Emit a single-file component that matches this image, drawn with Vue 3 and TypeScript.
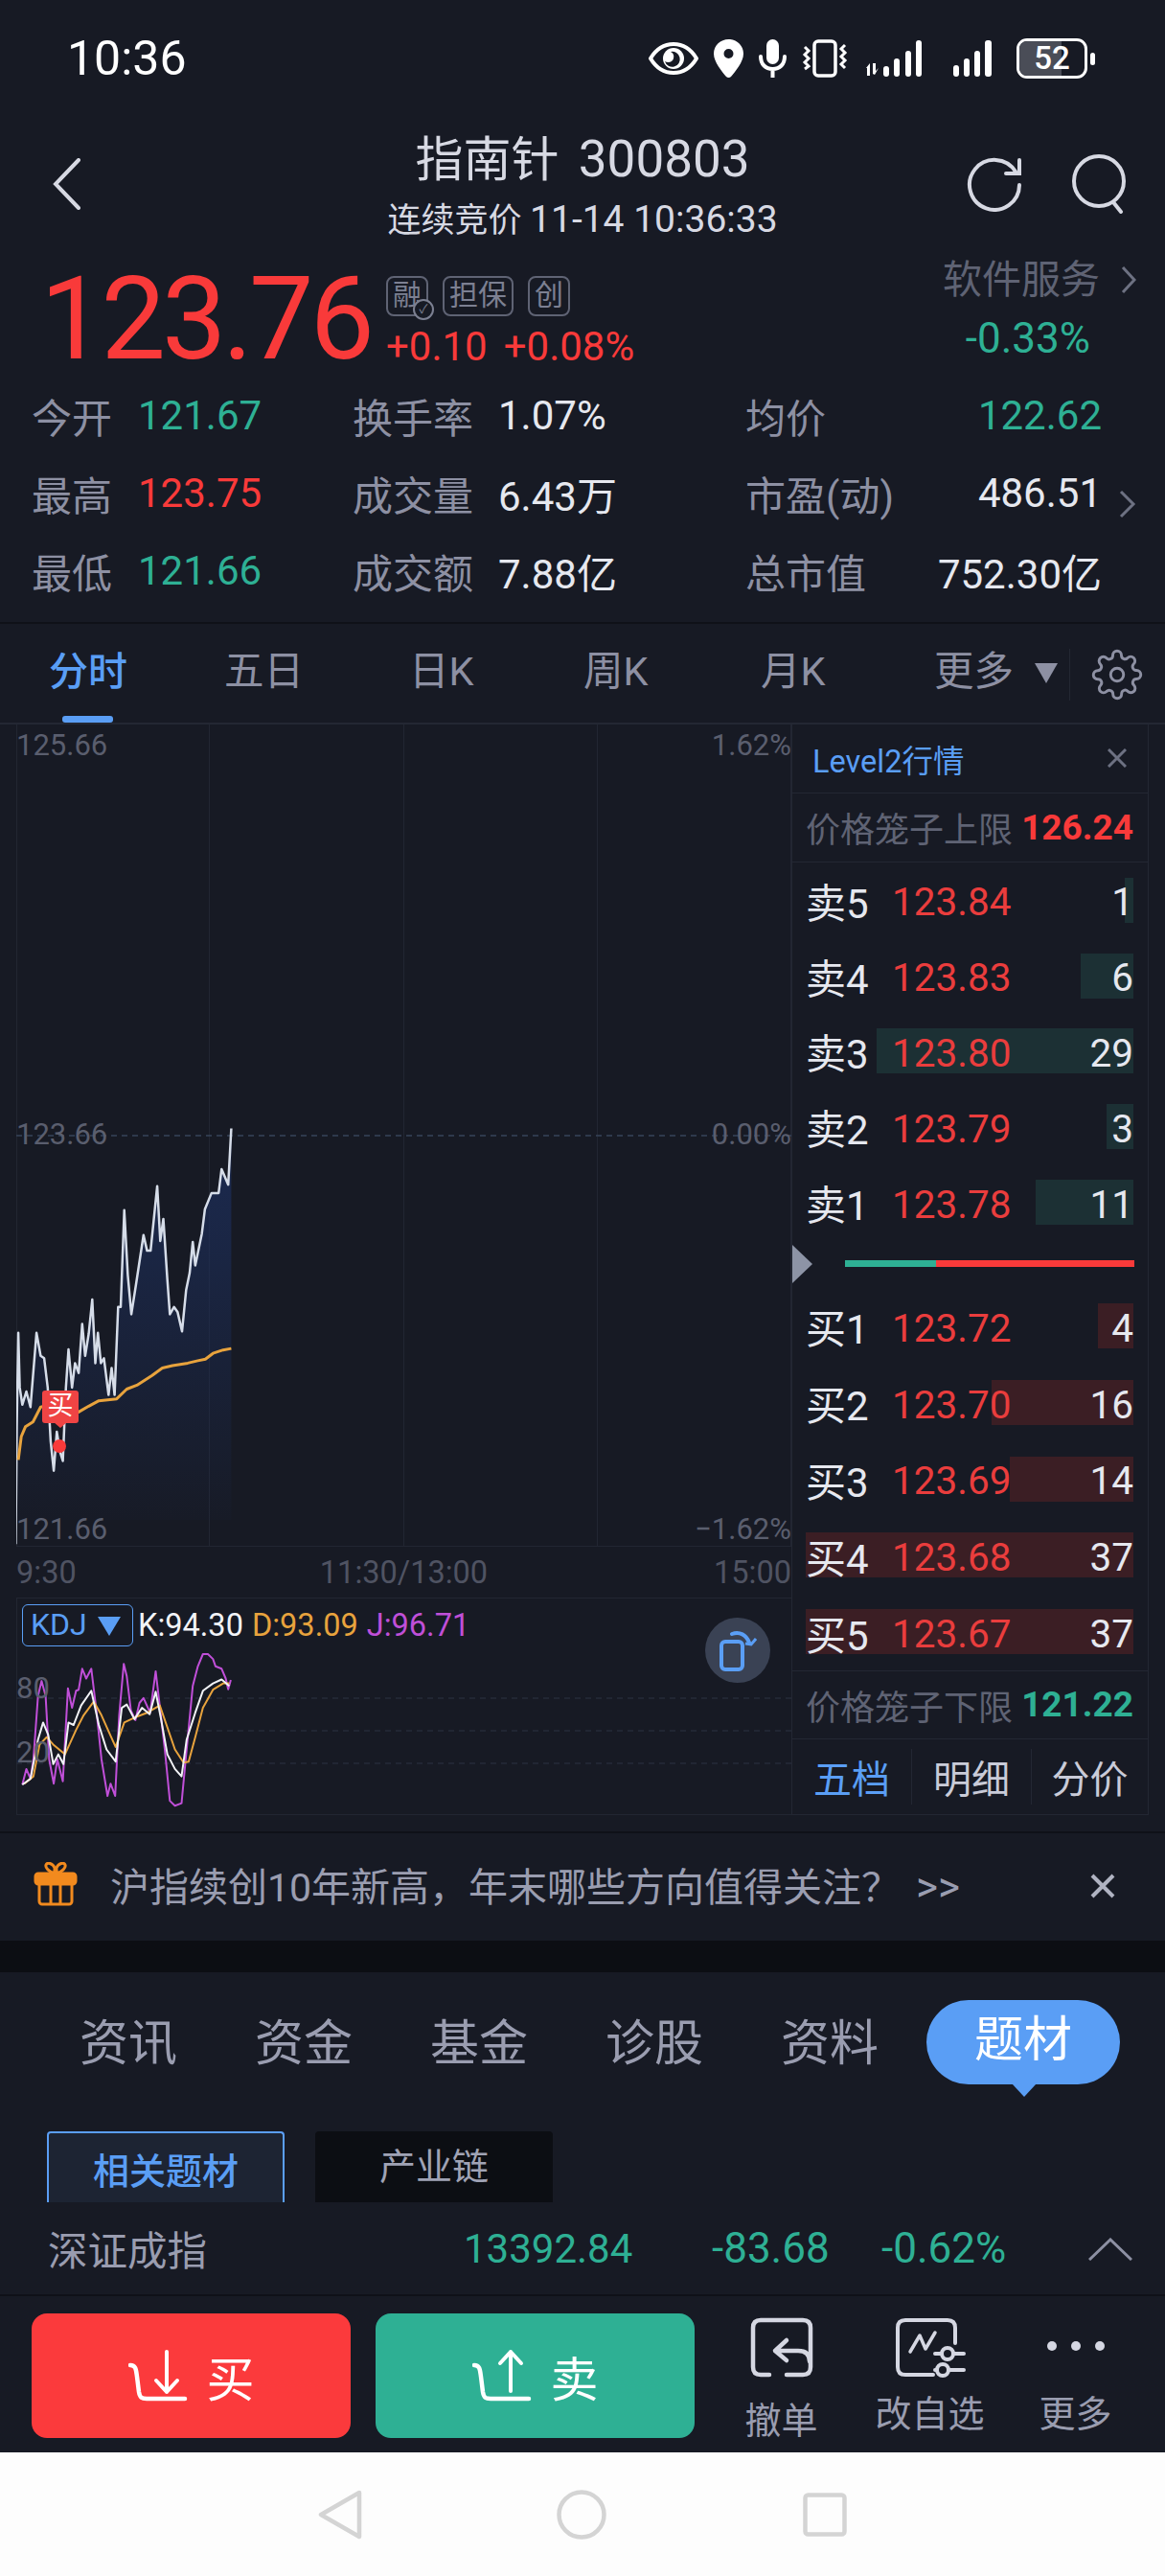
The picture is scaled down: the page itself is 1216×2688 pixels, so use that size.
<script setup lang="ts">
// 行情详情页 指南针 300803
type Pt = [number, number]

const stats = [
  [{ label: '今开', value: '121.67', cls: 'green' }, { label: '换手率', value: '1.07%', cls: '' }, { label: '均价', value: '122.62', cls: 'green' }],
  [{ label: '最高', value: '123.75', cls: 'red' }, { label: '成交量', value: '6.43万', cls: '' }, { label: '市盈(动)', value: '486.51', cls: '' }],
  [{ label: '最低', value: '121.66', cls: 'green' }, { label: '成交额', value: '7.88亿', cls: '' }, { label: '总市值', value: '752.30亿', cls: '' }],
]
const flat = stats.flat()

const chartTabs = ['五日', '日K', '周K', '月K']
const newsTabs = ['资讯', '资金', '基金', '诊股', '资料']

const asks = [
  { name: '卖5', price: '123.84', qty: 1, bar: 9 },
  { name: '卖4', price: '123.83', qty: 6, bar: 55 },
  { name: '卖3', price: '123.80', qty: 29, bar: 268 },
  { name: '卖2', price: '123.79', qty: 3, bar: 28 },
  { name: '卖1', price: '123.78', qty: 11, bar: 102 },
]
const bids = [
  { name: '买1', price: '123.72', qty: 4, bar: 37 },
  { name: '买2', price: '123.70', qty: 16, bar: 148 },
  { name: '买3', price: '123.69', qty: 14, bar: 129 },
  { name: '买4', price: '123.68', qty: 37, bar: 342 },
  { name: '买5', price: '123.67', qty: 37, bar: 342 },
]

const pricePts: Pt[] = [[31,1000],[33,760],[36,568],[39,680],[44,715],[52,688],[60,720],[72,568],[80,615],[87,620],[94,680],[100,790],[106,850],[112,770],[118,810],[124,830],[130,680],[135,602],[142,680],[148,630],[155,650],[162,550],[168,615],[175,570],[182,500],[188,630],[193,568],[199,630],[205,620],[214,695],[220,640],[226,695],[233,515],[238,515],[245,317],[252,450],[259,530],[268,470],[283,368],[290,400],[297,400],[310,268],[316,380],[322,335],[330,460],[335,530],[343,515],[350,525],[359,565],[367,480],[374,445],[380,382],[385,430],[398,365],[404,315],[417,282],[431,282],[437,233],[450,265],[456,150]]
const avgPts: Pt[] = [[36,828],[42,780],[50,760],[65,750],[80,720],[100,715],[155,730],[175,718],[195,707],[230,703],[250,683],[270,675],[300,655],[320,640],[340,635],[370,630],[390,625],[405,622],[420,610],[440,603],[456,600]]
const jPts: Pt[] = [[44,1492],[52,1460],[60,1480],[66,1440],[75,1310],[82,1280],[90,1310],[97,1440],[106,1490],[113,1440],[124,1485],[134,1295],[142,1335],[150,1300],[155,1298],[162,1255],[170,1275],[180,1255],[190,1340],[200,1440],[212,1515],[218,1490],[227,1515],[235,1350],[244,1245],[250,1270],[258,1340],[267,1360],[275,1325],[283,1315],[296,1345],[307,1260],[316,1340],[325,1420],[335,1525],[345,1535],[358,1530],[367,1430],[380,1290],[390,1250],[400,1225],[410,1225],[420,1235],[425,1250],[437,1255],[445,1275],[450,1297],[455,1278]]
const kPts: Pt[] = [[44,1492],[60,1480],[75,1400],[85,1365],[95,1390],[105,1450],[115,1430],[125,1450],[135,1365],[145,1370],[160,1330],[180,1300],[195,1370],[210,1420],[228,1445],[240,1335],[250,1328],[265,1358],[280,1335],[295,1348],[307,1302],[318,1360],[330,1430],[345,1460],[358,1475],[368,1400],[385,1345],[400,1300],[420,1285],[437,1277],[452,1290]]
const dPts: Pt[] = [[48,1490],[66,1475],[78,1410],[92,1395],[105,1410],[128,1430],[150,1380],[165,1350],[185,1322],[200,1350],[215,1385],[228,1415],[245,1365],[265,1355],[290,1345],[315,1330],[330,1375],[345,1420],[362,1447],[372,1445],[385,1395],[400,1335],[420,1298],[440,1285],[452,1285]]

// 采样坐标换算成 svg 里的像素
function toLine(pts: Pt[], top: number) {
  return pts.map(([x, y]) => `${(x / 1.889 - 17).toFixed(1)},${(y / 1.96 + 1100 - top).toFixed(1)}`).join(' ')
}
const priceLine = toLine(pricePts, 755)
const avgLine = toLine(avgPts, 755)
const areaLine = `${priceLine} 224.4,830 0,830`
const jLine = toLine(jPts, 1666)
const kLine = toLine(kPts, 1666)
const dLine = toLine(dPts, 1666)
</script>

<template>
  <div class="page">
    <div class="status">
      <span class="time">10:36</span>
      <div class="status-icons">
        <svg width="52" height="36" viewBox="0 0 52 36" fill="none"><path d="M2 18C8 8 16 3 26 3s18 5 24 15c-6 10-14 15-24 15S8 28 2 18z" stroke="#fff" stroke-width="4"/><circle cx="26" cy="18" r="11" fill="#fff"/><path d="M23 11a8 8 0 1 1-6 10c3 2 8 1 9-3s-1-6-3-7z" fill="#171a24"/></svg>
        <svg width="31" height="40" viewBox="0 0 31 40"><path fill-rule="evenodd" d="M15.500 0C7 0 0 6.500 0 15c0 9 9 19 13 24 1.500 1.300 3.500 1.300 5 0 4-5 13-15 13-24C31 6.500 24 0 15.500 0zm0 10a5 5 0 1 1 0 10 5 5 0 0 1 0-10z" fill="#fff"/></svg>
        <svg width="29" height="40" viewBox="0 0 29 40" fill="none"><rect x="8" y="0" width="13" height="26" rx="6.500" fill="#fff"/><path d="M2 18c0 8 5 13 12.500 13S27 26 27 18M14.500 31v9" stroke="#fff" stroke-width="4" stroke-linecap="round"/></svg>
        <svg width="48" height="40" viewBox="0 0 48 40" fill="none" stroke="#fff"><rect x="13" y="2" width="22" height="36" rx="4" stroke-width="3.500"/><path d="M3 8l4 4-4 4 4 4-4 4 4 4-4 3M45 6l-4 4 4 4-4 4 4 4-4 4 4 4" stroke-width="3"/></svg>
        <svg width="70" height="40" viewBox="0 0 70 40" fill="#fff"><path d="M3 30l4-5v13H4V30zM10 25h3v8l3-3-4 7-2-1z"/><rect x="21" y="28" width="6" height="11" rx="3"/><rect x="32" y="20" width="6" height="19" rx="3"/><rect x="44" y="12" width="6" height="27" rx="3"/><rect x="55" y="1" width="6" height="38" rx="3"/></svg>
        <svg class="sig2" width="50" height="40" viewBox="0 0 50 40" fill="#fff"><rect x="0" y="27" width="6" height="12" rx="3"/><rect x="11" y="20" width="6" height="19" rx="3"/><rect x="22" y="12" width="6" height="27" rx="3"/><rect x="33" y="1" width="7" height="38" rx="3"/></svg>
        <div class="battery"><span class="battery-fill"></span><span class="battery-num">52</span></div>
        <span class="battery-nub"></span>
      </div>
    </div>

    <div class="topbar">
      <svg class="back" width="30" height="54" viewBox="0 0 30 54" fill="none"><path d="M27 2L3 27l24 25" stroke="#d7d9e3" stroke-width="4" stroke-linecap="round"/></svg>
      <div class="title-box">
        <div class="title">指南针 <span class="title-num">300803</span></div>
        <div class="subtitle">连续竞价 <span class="sub-num">11-14 10:36:33</span></div>
      </div>
      <div class="top-actions">
        <svg width="60" height="60" viewBox="0 0 60 60" fill="none" stroke="#d7d9e3" stroke-width="4" stroke-linecap="round"><path d="M52 18A26 26 0 1 0 56 32"/><path d="M56 6v14H42"/></svg>
        <svg width="60" height="62" viewBox="0 0 60 62" fill="none" stroke="#d7d9e3" stroke-width="4" stroke-linecap="round"><circle cx="29" cy="28" r="26"/><path d="M44 50l8 10"/></svg>
      </div>
    </div>

    <div class="quote">
      <div class="big-price">123.76</div>
      <div class="quote-mid">
        <div class="tags">
          <span class="tag tag-rong">融<i class="tag-check">✓</i></span>
          <span class="tag">担保</span>
          <span class="tag">创</span>
        </div>
        <div class="change"><span>+0.10</span><span>+0.08%</span></div>
      </div>
      <div class="service">
        <div class="service-name">软件服务
          <svg width="16" height="30" viewBox="0 0 16 30" fill="none"><path d="M2 2l12 13L2 28" stroke="#6d7182" stroke-width="3"/></svg>
        </div>
        <div class="service-val">-0.33%</div>
      </div>
    </div>

    <div class="stats">
      <div v-for="(s, i) in flat" :key="s.label" class="stat" :class="'col' + (i % 3)">
        <span class="stat-label">{{ s.label }}</span>
        <span class="stat-val" :class="s.cls">{{ s.value }}</span>
      </div>
      <svg class="stat-more" width="18" height="30" viewBox="0 0 18 30" fill="none"><path d="M2 2l13 13L2 28" stroke="#6d7182" stroke-width="3"/></svg>
    </div>

    <div class="chart-tabs">
      <div class="ctab active">分时<i class="ctab-line"></i></div>
      <div v-for="t in chartTabs" :key="t" class="ctab">{{ t }}</div>
      <div class="ctab more">更多<i class="tri"></i></div>
      <div class="gear-box">
        <svg width="54" height="54" viewBox="0 0 24 24" fill="none" stroke="#8d90a3" stroke-width="1.300"><path d="M12 15a3 3 0 1 0 0-6 3 3 0 0 0 0 6z"/><path d="M19.400 15a1.650 1.650 0 0 0 .33 1.820l.06.06a2 2 0 0 1 0 2.830 2 2 0 0 1-2.830 0l-.06-.06a1.650 1.650 0 0 0-1.820-.33 1.650 1.650 0 0 0-1 1.510V21a2 2 0 0 1-2 2 2 2 0 0 1-2-2v-.09A1.650 1.650 0 0 0 9 19.400a1.650 1.650 0 0 0-1.820.33l-.06.06a2 2 0 0 1-2.830 0 2 2 0 0 1 0-2.830l.06-.06a1.650 1.650 0 0 0 .33-1.820 1.650 1.650 0 0 0-1.510-1H3a2 2 0 0 1-2-2 2 2 0 0 1 2-2h.09A1.650 1.650 0 0 0 4.600 9a1.650 1.650 0 0 0-.33-1.820l-.06-.06a2 2 0 0 1 0-2.830 2 2 0 0 1 2.830 0l.06.06a1.650 1.650 0 0 0 1.820.33H9a1.650 1.650 0 0 0 1-1.510V3a2 2 0 0 1 2-2 2 2 0 0 1 2 2v.09a1.650 1.650 0 0 0 1 1.510 1.650 1.650 0 0 0 1.820-.33l.06-.06a2 2 0 0 1 2.830 0 2 2 0 0 1 0 2.830l-.06.06a1.650 1.650 0 0 0-.33 1.820V9a1.650 1.650 0 0 0 1.510 1H21a2 2 0 0 1 2 2 2 2 0 0 1-2 2h-.09a1.650 1.650 0 0 0-1.510 1z"/></svg>
      </div>
    </div>

    <div class="market">
      <div class="chart-col">
        <div class="chart">
          <svg class="fill-svg" width="809" height="858" viewBox="0 0 809 858" fill="none">
            <defs>
              <linearGradient id="area" x1="0" y1="0" x2="0" y2="1">
                <stop offset="0" stop-color="#1d3060" stop-opacity=".75"/>
                <stop offset="1" stop-color="#1d3060" stop-opacity="0"/>
              </linearGradient>
            </defs>
            <path d="M.5 0V858M201.500 0V858M404.500 0V858M606.500 0V858M808.500 0V858M0 857.500H809" stroke="#222632" stroke-width="1"/>
            <path d="M0 429H809" stroke="#37445a" stroke-width="1.500" stroke-dasharray="6 5"/>
            <polygon :points="areaLine" fill="url(#area)"/>
            <polyline :points="priceLine" stroke="#d6dde9" stroke-width="2.500" stroke-linejoin="round"/>
            <polyline :points="avgLine" stroke="#e8a33d" stroke-width="3" stroke-linejoin="round"/>
          </svg>
          <span class="axis top-l">125.66</span>
          <span class="axis top-r">1.62%</span>
          <span class="axis mid-l">123.66</span>
          <span class="axis mid-r">0.00%</span>
          <span class="axis bot-l">121.66</span>
          <span class="axis bot-r">−1.62%</span>
          <div class="buy-mark">买</div>
          <span class="buy-dot"></span>
        </div>
        <div class="time-axis"><span>9:30</span><span>11:30/13:00</span><span class="ta-end">15:00</span></div>
        <div class="kdj">
          <svg class="fill-svg" width="809" height="227" viewBox="0 0 809 227" fill="none">
            <path d="M.5 0V227M0 .5H809M0 226.500H809" stroke="#222632" stroke-width="1"/>
            <path d="M0 105H809M0 139H809M0 173H809" stroke="#262b38" stroke-width="1.500" stroke-dasharray="6 5"/>
            <polyline :points="jLine" stroke="#c04fd8" stroke-width="2" stroke-linejoin="round"/>
            <polyline :points="dLine" stroke="#e8a33d" stroke-width="2" stroke-linejoin="round"/>
            <polyline :points="kLine" stroke="#f2f3f7" stroke-width="2" stroke-linejoin="round"/>
          </svg>
          <span class="axis k80">80</span>
          <span class="axis k20">20</span>
          <div class="kdj-head">
            <span class="kdj-btn">KDJ<i class="kdj-tri"></i></span>
            <span class="k-k">K:94.30</span>
            <span class="k-d">D:93.09</span>
            <span class="k-j">J:96.71</span>
          </div>
          <div class="rotate">
            <svg width="40" height="44" viewBox="0 0 40 44" fill="none" stroke="#5a9ef5" stroke-width="4"><rect x="3" y="13" width="22" height="29" rx="4"/><path d="M14 5c8-3 15 1 18 9" stroke-linecap="round"/><path d="M28 15l6 1 5-6" stroke-width="3"/></svg>
          </div>
        </div>
      </div>

      <div class="panel">
        <div class="panel-head">
          <span>Level2行情</span>
          <svg width="20" height="20" viewBox="0 0 20 20" stroke="#6d7182" stroke-width="3"><path d="M1 1l18 18M19 1L1 19"/></svg>
        </div>
        <div class="limit"><span>价格笼子上限</span><b class="red">126.24</b></div>
        <div v-for="r in asks" :key="r.name" class="row ask">
          <i class="depth ask-bar" :style="{ width: r.bar + 'px' }"></i>
          <span class="r-name">{{ r.name }}</span>
          <span class="r-price">{{ r.price }}</span>
          <span class="r-qty">{{ r.qty }}</span>
        </div>
        <div class="ratio">
          <i class="ratio-tri"></i>
          <div class="ratio-bar"><i class="ratio-green"></i><i class="ratio-red"></i></div>
        </div>
        <div v-for="r in bids" :key="r.name" class="row bid">
          <i class="depth bid-bar" :style="{ width: r.bar + 'px' }"></i>
          <span class="r-name">{{ r.name }}</span>
          <span class="r-price">{{ r.price }}</span>
          <span class="r-qty">{{ r.qty }}</span>
        </div>
        <div class="limit low"><span>价格笼子下限</span><b class="green">121.22</b></div>
        <div class="panel-tabs">
          <span class="blue">五档</span>
          <span>明细</span>
          <span>分价</span>
        </div>
      </div>
    </div>

    <div class="banner">
      <svg width="46" height="46" viewBox="0 0 46 46" fill="none" stroke="#f28a1e" stroke-width="3"><path d="M22 12C16 10 12 6 13 3c1-3 7-2 9 3 0 2 0 4 0 6zM24 12c6-2 10-6 9-9-1-3-7-2-9 3 0 2 0 4 0 6z"/><rect x="2" y="12" width="42" height="11" rx="3" fill="#f28a1e"/><path d="M6 23v18a3 3 0 0 0 3 3h28a3 3 0 0 0 3-3V23M18 23v21M28 23v21"/></svg>
      <span class="banner-text">沪指续创10年新高，年末哪些方向值得关注？<span class="banner-more">&gt;&gt;</span></span>
      <svg class="banner-x" width="28" height="28" viewBox="0 0 28 28" stroke="#b0b3c2" stroke-width="4"><path d="M3 3l22 22M25 3L3 25"/></svg>
    </div>

    <div class="gap"></div>

    <div class="news-tabs">
      <span v-for="t in newsTabs" :key="t" class="ntab">{{ t }}</span>
      <span class="ntab-on">题材</span>
    </div>

    <div class="sub-tabs">
      <div class="stab on">相关题材</div>
      <div class="stab">产业链</div>
    </div>

    <div class="index-bar">
      <span class="idx-name">深证成指</span>
      <span class="idx-a green">13392.84</span>
      <span class="idx-b green">-83.68</span>
      <span class="idx-c green">-0.62%</span>
      <svg width="46" height="24" viewBox="0 0 46 24" fill="none"><path d="M1 23L23 2l22 21" stroke="#8d90a3" stroke-width="3"/></svg>
    </div>

    <div class="actions">
      <div class="trade buy">
        <svg width="62" height="56" viewBox="0 0 62 56" fill="none" stroke="#fff" stroke-width="4.500" stroke-linecap="round" stroke-linejoin="round"><path d="M2 17c6 0 6 5 7 12l2 16c1 6 3 7 8 7h40"/><path d="M40 3v42M29 33l11 12 11-12" stroke-width="4"/></svg>
        <span>买</span>
      </div>
      <div class="trade sell">
        <svg width="62" height="56" viewBox="0 0 62 56" fill="none" stroke="#fff" stroke-width="4.500" stroke-linecap="round" stroke-linejoin="round"><path d="M2 17c6 0 6 5 7 12l2 16c1 6 3 7 8 7h40"/><path d="M40 44V3M29 15L40 3l11 12" stroke-width="4"/></svg>
        <span>卖</span>
      </div>
      <div class="tool t1">
        <svg width="66" height="64" viewBox="0 0 66 64" fill="none" stroke="#d5d7e2" stroke-width="4.500" stroke-linecap="round" stroke-linejoin="round"><path d="M20 60H11q-8 0-8-8V11q0-8 8-8h44q8 0 8 8v41q0 8-8 8H38"/><path d="M38 24L26 35l12 10M26 35h24q12 0 12 11"/></svg>
        <span>撤单</span>
      </div>
      <div class="tool t2">
        <svg width="74" height="64" viewBox="0 0 74 64" fill="none" stroke="#d5d7e2" stroke-width="4" stroke-linecap="round" stroke-linejoin="round"><path d="M40 60H11q-8 0-8-8V11q0-8 8-8h44q8 0 8 8v16"/><path d="M16 36l10-17 6 14 10-17" stroke-width="3.500"/><path d="M42 38h30M42 55h30"/><circle cx="55" cy="38" r="6" fill="#171a24"/><circle cx="50" cy="55" r="6" fill="#171a24"/></svg>
        <span>改自选</span>
      </div>
      <div class="tool t3">
        <svg width="62" height="64" viewBox="0 0 62 64" fill="#d5d7e2"><circle cx="6" cy="30" r="5"/><circle cx="31" cy="30" r="5"/><circle cx="56" cy="30" r="5"/></svg>
        <span>更多</span>
      </div>
    </div>

    <div class="navbar">
      <svg width="46" height="52" viewBox="0 0 46 52" fill="none"><path d="M43 3L3 26l40 23z" stroke="#d4d4d4" stroke-width="4.500" stroke-linejoin="round"/></svg>
      <svg width="52" height="52" viewBox="0 0 52 52" fill="none"><circle cx="26" cy="26" r="23.500" stroke="#d4d4d4" stroke-width="4.500"/></svg>
      <svg width="46" height="46" viewBox="0 0 46 46" fill="none"><rect x="2.500" y="2.500" width="41" height="41" rx="3" stroke="#d4d4d4" stroke-width="4.500"/></svg>
    </div>
  </div>
</template>

<style scoped>
.page {
  width: 1216px;
  height: 2688px;
  overflow: hidden;
  background: #171a24;
  color: #e6e8ef;
  font-family: Roboto, "Noto Sans CJK SC", sans-serif;
  display: flex;
  flex-direction: column;
}
.red { color: #f93a3a; }
.green { color: #2eb094; }
.blue { color: #5a9ef5; }

.status {
  height: 110px;
  display: flex;
  align-items: center;
  justify-content: space-between;
  padding: 12px 73px 0 70px;
  box-sizing: border-box;
}
.time { font-size: 50px; color: #fff; }
.status-icons { display: flex; align-items: center; gap: 16px; }
.sig2 { margin-left: 8px; }
.battery {
  position: relative;
  width: 74px;
  height: 42px;
  border: 3px solid #fff;
  border-radius: 11px;
  box-sizing: border-box;
  overflow: hidden;
}
.battery-fill { position: absolute; left: 0; top: 0; bottom: 0; width: 44px; background: #4a4d57; }
.battery-num {
  position: absolute;
  inset: 0;
  text-align: center;
  line-height: 35px;
  font-size: 33px;
  font-weight: 500;
  color: #fff;
}
.battery-nub { width: 5px; height: 13px; background: #fff; border-radius: 3px; margin-left: -13px; }

.topbar {
  height: 140px;
  display: grid;
  grid-template-columns: 1fr auto 1fr;
  align-items: start;
  padding: 0 38px 0 28px;
}
.back { margin: 55px 0 0 27px; }
.title-box { text-align: center; padding-top: 26px; margin-left: 10px; }
.title { font-size: 50px; line-height: 60px; color: #d7d9e3; white-space: nowrap; }
.title-num { font-size: 53px; margin-left: 8px; }
.subtitle { font-size: 35px; line-height: 36px; margin-top: 14px; color: #d7d9e3; white-space: nowrap; }
.sub-num { font-size: 39px; }
.top-actions { display: flex; justify-content: flex-end; gap: 50px; padding-top: 51px; }

.quote { height: 143px; display: flex; padding-left: 42px; position: relative; }
.big-price {
  font-size: 120px;
  line-height: 118px;
  height: 118px;
  margin-top: 24px;
  color: #f93a3a;
  letter-spacing: -4px;
  width: 361px;
}
.quote-mid { padding-top: 38px; }
.tags { display: flex; gap: 15px; }
.tag {
  position: relative;
  height: 42px;
  padding: 0 5px;
  border: 2px solid #5f6374;
  border-radius: 8px;
  box-sizing: border-box;
  font-size: 30px;
  line-height: 36px;
  color: #7c8092;
}
.tag-check {
  position: absolute;
  right: -8px;
  bottom: -6px;
  width: 18px;
  height: 18px;
  background: #171a24;
  border: 2px solid #7c8092;
  border-radius: 50%;
  font-size: 13px;
  line-height: 18px;
  text-align: center;
  font-style: normal;
}
.change { display: flex; gap: 17px; font-size: 42px; line-height: 48px; margin-top: 8px; color: #f93a3a; }
.service { margin-left: auto; padding-right: 30px; padding-top: 18px; text-align: right; }
.service-name { display: flex; align-items: center; gap: 22px; font-size: 41px; line-height: 48px; color: #5f6374; }
.service-val { font-size: 44px; line-height: 48px; margin: 13px 48px 0 0; color: #2eb094; }

.stats {
  position: relative;
  display: grid;
  grid-template-columns: 335px 410px 372px;
  grid-auto-rows: 81px;
  padding: 0 0 13px 33px;
  border-bottom: 2px solid #0f1118;
}
.stat { display: flex; align-items: center; font-size: 42px; }
.stat-label { color: #8d90a3; }
.stat-val { font-size: 42px; color: #e6e8ef; }
.col0 .stat-val { margin-left: 27px; }
.col0 .stat-val.red { color: #f93a3a; }
.col0 .stat-val.green, .col2 .stat-val.green { color: #2eb094; }
.col1 .stat-val { margin-left: 26px; }
.col2 .stat-val { margin-left: auto; }
.stat-more { position: absolute; left: 1168px; top: 118px; }

.chart-tabs {
  position: relative;
  height: 105px;
  display: flex;
  align-items: center;
  font-size: 41.500px;
  color: #8d90a3;
  padding-bottom: 6px;
  box-sizing: border-box;
  border-bottom: 2px solid #232733;
}
.ctab { position: absolute; top: 26px; line-height: 48px; }
.ctab.active { left: 51px; color: #5a9ef5; font-weight: 500; font-size: 41px; }
.ctab:nth-child(2) { left: 234px; }
.ctab:nth-child(3) { left: 427px; }
.ctab:nth-child(4) { left: 609px; }
.ctab:nth-child(5) { left: 794px; }
.ctab.more { left: 975px; }
.ctab-line {
  position: absolute;
  left: 14px;
  top: 70px;
  width: 53px;
  height: 7px;
  border-radius: 3px;
  background: #5a9ef5;
}
.tri {
  position: absolute;
  left: 105px;
  top: 15px;
  border-left: 12px solid transparent;
  border-right: 12px solid transparent;
  border-top: 21px solid #8d90a3;
}
.gear-box { position: absolute; left: 1116px; top: 26px; width: 90px; padding-left: 22px; box-sizing: border-box; border-left: 1px solid #232733; height: 54px; }

.market { display: flex; padding: 0 17px; height: 1138px; }
.chart-col { width: 809px; display: flex; flex-direction: column; }
.chart { position: relative; height: 858px; }
.fill-svg { position: absolute; left: 0; top: 0; }
.axis { position: absolute; font-size: 31px; line-height: 36px; color: #5a5e6e; }
.top-l { left: 0; top: 4px; }
.top-r { right: 0; top: 4px; }
.mid-l { left: 0; top: 410px; }
.mid-r { right: 0; top: 410px; }
.bot-l { left: 0; top: 822px; }
.bot-r { right: 0; top: 822px; }
.buy-mark {
  position: absolute;
  left: 27px;
  top: 695px;
  width: 38px;
  height: 34px;
  background: #ef4444;
  border-radius: 3px;
  color: #fff;
  font-size: 27px;
  line-height: 33px;
  text-align: center;
}
.buy-mark::after {
  content: "";
  position: absolute;
  left: 12px;
  top: 33px;
  border-left: 7px solid transparent;
  border-right: 7px solid transparent;
  border-top: 6px solid #ef4444;
}
.buy-dot { position: absolute; left: 38px; top: 746px; width: 14px; height: 14px; border-radius: 50%; background: #f93a3a; }
.time-axis {
  height: 53px;
  display: grid;
  grid-template-columns: 1fr auto 1fr;
  align-items: center;
  font-size: 32.500px;
  color: #4f5362;
}
.ta-end { text-align: right; }
.kdj { position: relative; height: 227px; }
.k80 { left: 0; top: 77px; }
.k20 { left: 0; top: 144px; }
.kdj-head { position: relative; display: flex; align-items: center; gap: 9px; padding: 7px 0 0 6px; font-size: 32.500px; line-height: 44px; }
.kdj-btn {
  position: relative;
  width: 116px;
  height: 44px;
  box-sizing: border-box;
  border: 1.500px solid #5a9ef5;
  border-radius: 6px;
  padding-left: 8px;
  font-size: 32px;
  line-height: 41px;
  color: #5a9ef5;
  margin-right: -4px;
}
.kdj-tri {
  position: absolute;
  right: 12px;
  top: 12px;
  border-left: 12px solid transparent;
  border-right: 12px solid transparent;
  border-top: 20px solid #5a9ef5;
}
.k-k { color: #f2f3f7; }
.k-d { color: #e8a33d; }
.k-j { color: #c04fd8; }
.rotate {
  position: absolute;
  left: 719px;
  top: 21px;
  width: 68px;
  height: 68px;
  border-radius: 50%;
  background: #3a4254;
  display: flex;
  align-items: center;
  justify-content: center;
}

.panel {
  width: 373px;
  box-sizing: border-box;
  border-left: 1px solid #232733;
  border-right: 1px solid #232733;
  border-bottom: 1px solid #232733;
  display: flex;
  flex-direction: column;
}
.panel-head {
  height: 72px;
  display: flex;
  align-items: center;
  justify-content: space-between;
  padding: 0 22px 0 21px;
  font-size: 32.500px;
  color: #5a9ef5;
  border-bottom: 1px solid #232733;
  box-sizing: border-box;
}
.limit {
  height: 72px;
  box-sizing: border-box;
  flex-shrink: 0;
  display: flex;
  align-items: center;
  justify-content: space-between;
  padding: 0 15px 0 14px;
  font-size: 36px;
  color: #5f6374;
  border-bottom: 1px solid #232733;
}
.limit b { font-size: 37px; font-weight: 700; font-family: Roboto, sans-serif; }
.limit.low { border-top: 1px solid #232733; }
.row { position: relative; display: flex; align-items: center; font-size: 42px; padding: 0 15px 0 14px; }
.ask { height: 79px; }
.bid { height: 80px; }
.r-name, .r-price, .r-qty { position: relative; }
.r-name { width: 90px; color: #e6e8ef; }
.r-price { color: #ea3d3d; font-size: 40.500px; top: 2px; }
.r-qty { margin-left: auto; color: #e6e8ef; font-size: 40.500px; top: 2px; }
.depth { position: absolute; right: 15px; top: 16px; height: 47px; }
.ask-bar { background: #1c3034; }
.bid-bar { background: #3b1e24; }
.ratio { position: relative; height: 50px; flex-shrink: 0; }
.ratio-tri {
  position: absolute;
  left: 0;
  top: 5px;
  border-top: 20px solid transparent;
  border-bottom: 20px solid transparent;
  border-left: 21px solid #8d94a6;
}
.ratio-bar { position: absolute; left: 55px; top: 21px; width: 302px; height: 7px; display: flex; }
.ratio-green { width: 95px; background: #2eb094; }
.ratio-red { flex: 1; background: #f93a3a; }
.panel-tabs { flex: 1; display: grid; grid-template-columns: 124px 125px 1fr; font-size: 40px; color: #c9cbd8; }
.panel-tabs span { display: flex; align-items: center; justify-content: center; margin: 10px 0; }
.panel-tabs span + span { border-left: 1px solid #232733; }

.banner {
  margin-top: 17px;
  height: 114px;
  box-sizing: border-box;
  border-top: 2px solid #0f1118;
  display: flex;
  align-items: center;
  padding: 0 0 6px 35px;
  font-size: 41px;
  color: #9a9db0;
  position: relative;
}
.banner-text { margin-left: 34px; white-space: nowrap; }
.banner-more { margin-left: 16px; font-size: 44px; }
.banner-x { position: absolute; left: 1137px; top: 41px; }
.gap { height: 33px; background: #0c0e13; flex-shrink: 0; }

.news-tabs { position: relative; height: 166px; display: flex; align-items: center; padding-left: 83px; gap: 81px; font-size: 51px; color: #9a9db0; flex-shrink: 0; box-sizing: border-box; padding-bottom: 26px; }
.ntab { width: 102px; white-space: nowrap; }
.ntab-on {
  position: absolute;
  left: 967px;
  top: 29px;
  width: 202px;
  height: 88px;
  border-radius: 44px / 44px;
  background: #5a9ef5;
  color: #fff;
  text-align: center;
  line-height: 84px;
}
.ntab-on::after {
  content: "";
  position: absolute;
  left: 89px;
  top: 87px;
  border-left: 13px solid transparent;
  border-right: 13px solid transparent;
  border-top: 14px solid #5a9ef5;
}

.sub-tabs { display: flex; gap: 32px; padding-left: 49px; height: 74px; flex-shrink: 0; }
.stab {
  width: 248px;
  height: 74px;
  box-sizing: border-box;
  background: #0c0e13;
  border-radius: 4px 4px 0 0;
  text-align: center;
  font-size: 38px;
  line-height: 74px;
  color: #a0a3b5;
}
.stab.on {
  background: #1d2433;
  border: 2px solid #5a9ef5;
  border-bottom: none;
  color: #5a9ef5;
  font-weight: 500;
  line-height: 80px;
}

.index-bar {
  height: 98px;
  flex-shrink: 0;
  box-sizing: border-box;
  border-bottom: 2px solid #0f1118;
  position: relative;
  display: flex;
  align-items: center;
  padding-left: 50px;
  font-size: 41px;
}
.idx-name { color: #9a9db0; font-size: 41.500px; }
.idx-a { position: absolute; left: 484px; font-size: 42px; }
.idx-b { position: absolute; left: 743px; font-size: 44px; }
.idx-c { position: absolute; left: 920px; font-size: 44px; }
.index-bar svg { position: absolute; left: 1136px; top: 37px; }

.actions { height: 163px; flex-shrink: 0; position: relative; display: flex; padding: 18px 0 0 33px; gap: 26px; box-sizing: border-box; }
.trade {
  width: 333px;
  height: 130px;
  border-radius: 16px;
  display: flex;
  align-items: center;
  justify-content: center;
  gap: 20px;
  color: #fff;
  font-size: 50px;
}
.buy { background: #fb3a3c; }
.sell { background: #2eb094; }
.tool { position: absolute; top: 22px; display: flex; flex-direction: column; align-items: center; font-size: 38px; color: #9a9db0; line-height: 44px; }
.tool span { margin-top: 22px; white-space: nowrap; }
.t1 { left: 778px; width: 75px; }
.t2 { left: 913px; width: 115px; }
.t3 { left: 1085px; width: 75px; }
.t2 span, .t3 span { margin-top: 15px; }

.navbar {
  flex: 1;
  background: #fdfdfd;
  position: relative;
  display: flex;
  align-items: center;
  gap: 0;
  padding-left: 332px;
}
.navbar svg:nth-child(2) { margin-left: 203px; }
.navbar svg:nth-child(3) { margin-left: 205px; }
</style>

<style>
html, body { background: #171a24; }
</style>
